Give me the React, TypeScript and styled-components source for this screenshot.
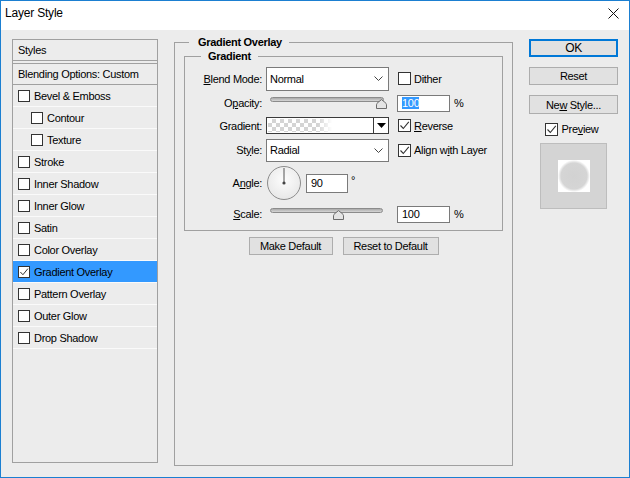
import React from "react";
import styled, { createGlobalStyle } from "styled-components";

const GlobalStyle = createGlobalStyle`
  html, body { margin: 0; padding: 0; }
  body {
    font-family: "Liberation Sans", Arial, sans-serif;
    font-size: 11px;
    letter-spacing: -0.3px;
    color: #000;
    background: #fff;
  }
  * { box-sizing: border-box; }
`;

const Window = styled.div`
  width: 630px;
  height: 478px;
  border: 1px solid #1b7fd1;
  background: #ececec;
  display: flex;
  flex-direction: column;
`;

const TitleBar = styled.div`
  height: 29px;
  flex-shrink: 0;
  background: #fff;
  display: flex;
  align-items: center;
  justify-content: space-between;
  padding: 0 10px 5px 4px;
  font-size: 12px;
  letter-spacing: -0.2px;
`;

const Body = styled.div`
  display: flex;
  align-items: flex-start;
  gap: 16px;
  padding: 9px 0 0 11px;
`;

/* ---------- left list ---------- */

const StylesPanel = styled.div`
  width: 146px;
  height: 424px;
  border: 1px solid #a0a0a0;
  flex-shrink: 0;
`;

const PanelHeader = styled.div`
  height: 21px;
  border-bottom: 1px solid #a0a0a0;
  display: flex;
  align-items: center;
  padding-left: 5px;
  margin-bottom: 2px;
`;

const BlendingRow = styled.div`
  height: 22px;
  border-top: 1px solid #a0a0a0;
  border-bottom: 1px solid #a0a0a0;
  display: flex;
  align-items: center;
  padding-left: 5px;
`;

const EffectRow = styled.div<{ $indent?: boolean; $selected?: boolean }>`
  height: 22px;
  border-bottom: 1px solid #fafafa;
  display: flex;
  align-items: center;
  gap: 4px;
  padding-left: ${(p) => (p.$indent ? 18 : 5)}px;
  background: ${(p) => (p.$selected ? "#3399ff" : "transparent")};
`;

/* ---------- checkbox ---------- */

const Box = styled.span<{ $size: number }>`
  width: ${(p) => p.$size}px;
  height: ${(p) => p.$size}px;
  border: 1px solid #333;
  background: #fff;
  display: inline-flex;
  align-items: center;
  justify-content: center;
  flex-shrink: 0;
`;

const CheckBox = ({ checked, size = 13 }: { checked?: boolean; size?: number }) => (
  <Box $size={size}>
    {checked && (
      <svg width={size - 2} height={size - 2} viewBox="0 0 11 11">
        <polyline points="1.5,5.5 4.3,8.5 9.8,1.8" fill="none" stroke="#333" strokeWidth="1.1" />
      </svg>
    )}
  </Box>
);

const CheckLabel = styled.label<{ $shift?: number }>`
  display: flex;
  align-items: center;
  gap: 3px;
  margin-left: ${(p) => p.$shift ?? 1}px;
  white-space: nowrap;
`;

/* ---------- center groups ---------- */

const OuterGroup = styled.fieldset`
  width: 339px;
  height: 430px;
  margin: -3px 0 0;
  padding: 0;
  border: 1px solid #a0a0a0;
  flex-shrink: 0;
  display: flex;
  flex-direction: column;
`;

const InnerGroup = styled.fieldset`
  margin: 1px 9px 0;
  padding: 3px 0 4px;
  border: 1px solid #a0a0a0;
`;

const Legend = styled.legend<{ $offset: number; $padLeft: number }>`
  font-weight: bold;
  line-height: 13px;
  margin-left: ${(p) => p.$offset}px;
  padding: 0 7px 0 ${(p) => p.$padLeft}px;
`;

const FormGrid = styled.div`
  display: grid;
  grid-template-columns: 81px 123px 1fr;
  grid-template-rows: 25px 24px 21px 28px 38px 24px;
  align-items: center;
`;

const FieldLabel = styled.div`
  text-align: right;
  padding-right: 4px;
  white-space: nowrap;
`;

const Trailing = styled.div`
  padding-left: 8px;
  display: flex;
  align-items: center;
`;

const Select = styled.div<{ $h: number }>`
  width: 123px;
  height: ${(p) => p.$h}px;
  border: 1px solid #7a7a7a;
  background: #fff;
  display: flex;
  align-items: center;
  justify-content: space-between;
  padding: 0 5px 0 3px;
`;

const Chevron = () => (
  <svg width="9" height="5" viewBox="0 0 9 5">
    <polyline points="0.5,0.5 4.5,4.5 8.5,0.5" fill="none" stroke="#444" strokeWidth="1" />
  </svg>
);

const SliderWrap = styled.div<{ $w: number }>`
  position: relative;
  width: ${(p) => p.$w}px;
  height: 12px;
  margin-left: 4px;
`;

const Track = styled.div`
  height: 5px;
  border: 1px solid #8b8b8b;
  border-radius: 3px;
  background: linear-gradient(#a9a9a9, #d6d6d6);
`;

const Thumb = styled.svg<{ $x: number }>`
  position: absolute;
  top: 2px;
  left: ${(p) => p.$x}px;
`;

const Slider = ({ width, at }: { width: number; at: number }) => (
  <SliderWrap $w={width}>
    <Track />
    <Thumb $x={at - 5.5} width="11" height="10" viewBox="0 0 11 10">
      <path
        d="M0.5 9.5 V5.8 Q0.5 4.4 2 3.4 L5.5 0.6 L9 3.4 Q10.5 4.4 10.5 5.8 V9.5 Z"
        fill="#e4e4e4"
        stroke="#6b6b6b"
      />
    </Thumb>
  </SliderWrap>
);

const TextField = styled.div<{ $w: number; $h: number }>`
  width: ${(p) => p.$w}px;
  height: ${(p) => p.$h}px;
  border: 1px solid #7a7a7a;
  background: #fff;
  display: flex;
  align-items: center;
  padding-left: 4px;
`;

const Selected = styled.span`
  background: #3399ff;
  color: #fff;
`;

const Unit = styled.span`
  margin-left: 4px;
`;

const GradientPicker = styled.div`
  width: 123px;
  height: 17px;
  border: 1px solid #3a3a3a;
  background: #fff;
  display: flex;
`;

const Swatch = styled.div`
  flex: 1;
  margin: 1px;
  background:
    linear-gradient(to right, rgba(255, 255, 255, 0) 0px, rgba(255, 255, 255, 0) 50px, #fff 64px),
    repeating-conic-gradient(#d4d4d4 0 25%, #fff 0 50%) 0 0 / 8px 8px;
`;

const ArrowCell = styled.div`
  width: 15px;
  border-left: 1px solid #3a3a3a;
  display: flex;
  align-items: center;
  justify-content: center;
`;

const AngleRow = styled.div`
  display: flex;
  align-items: center;
  height: 34px;
`;

const Dial = styled.div`
  width: 34px;
  height: 34px;
  margin-left: 1px;
  margin-right: 5px;
  border-radius: 50%;
  border: 1px solid #8c8c8c;
  background: radial-gradient(circle at 50% 40%, #fdfdfd, #e2e2e2);
  display: flex;
  align-items: center;
  justify-content: center;
`;

const Degree = styled.span`
  align-self: flex-start;
  margin: 8px 0 0 3px;
`;

const ButtonRow = styled.div`
  display: flex;
  justify-content: center;
  gap: 10px;
  margin-top: 6px;
`;

const Button = styled.button<{ $w?: number; $h?: number; $primary?: boolean }>`
  width: ${(p) => (p.$w ? `${p.$w}px` : "100%")};
  height: ${(p) => p.$h ?? 18}px;
  margin: 0;
  padding: 0;
  font: inherit;
  font-size: ${(p) => (p.$primary ? 12 : 11)}px;
  letter-spacing: -0.3px;
  color: #000;
  background: #e1e1e1;
  border: ${(p) => (p.$primary ? "2px solid #0078d7" : "1px solid #adadad")};
`;

/* ---------- right column ---------- */

const Actions = styled.div`
  width: 89px;
  display: flex;
  flex-direction: column;
  align-items: center;
  gap: 10px;
`;

const PreviewToggle = styled.label`
  display: flex;
  align-items: center;
  gap: 3px;
  height: 12px;
  margin-top: -1px;
  margin-left: -3px;
`;

const PreviewBox = styled.div`
  width: 67px;
  height: 66px;
  margin-top: -2px;
  background: #d4d4d4;
  border: 1px solid #bdbdbd;
  display: flex;
  align-items: center;
  justify-content: center;
`;

const PreviewTile = styled.div`
  width: 32px;
  height: 32px;
  background: radial-gradient(circle, #d2d2d2 0, #d5d5d5 13px, #fff 16px);
`;

const effects: { label: string; indent?: boolean; checked?: boolean }[] = [
  { label: "Bevel & Emboss" },
  { label: "Contour", indent: true },
  { label: "Texture", indent: true },
  { label: "Stroke" },
  { label: "Inner Shadow" },
  { label: "Inner Glow" },
  { label: "Satin" },
  { label: "Color Overlay" },
  { label: "Gradient Overlay", checked: true },
  { label: "Pattern Overlay" },
  { label: "Outer Glow" },
  { label: "Drop Shadow" },
];

const App = () => {
  return (
    <Window>
      <GlobalStyle />
      <TitleBar>
        <span>Layer Style</span>
        <svg width="11" height="11" viewBox="0 0 11 11">
          <path d="M0.5 0.5 L10.5 10.5 M10.5 0.5 L0.5 10.5" stroke="#111" strokeWidth="1" />
        </svg>
      </TitleBar>
      <Body>
        <StylesPanel>
          <PanelHeader>Styles</PanelHeader>
          <BlendingRow>Blending Options: Custom</BlendingRow>
          {effects.map((e) => (
            <EffectRow key={e.label} $indent={e.indent} $selected={e.checked}>
              <CheckBox size={12} checked={e.checked} />
              <span>{e.label}</span>
            </EffectRow>
          ))}
        </StylesPanel>

        <OuterGroup>
          <Legend $offset={14} $padLeft={9}>Gradient Overlay</Legend>
          <InnerGroup>
            <Legend $offset={16} $padLeft={7}>Gradient</Legend>
            <FormGrid>
              <FieldLabel><u>B</u>lend Mode:</FieldLabel>
              <Select $h={24}>
                <span>Normal</span>
                <Chevron />
              </Select>
              <Trailing>
                <CheckLabel><CheckBox /> Dither</CheckLabel>
              </Trailing>

              <FieldLabel>O<u>p</u>acity:</FieldLabel>
              <Slider width={114} at={111} />
              <Trailing>
                <TextField $w={53} $h={17}><Selected>100</Selected></TextField>
                <Unit>%</Unit>
              </Trailing>

              <FieldLabel>Gradient:</FieldLabel>
              <GradientPicker>
                <Swatch />
                <ArrowCell>
                  <svg width="9" height="5" viewBox="0 0 9 5">
                    <polygon points="0,0 9,0 4.5,5" fill="#000" />
                  </svg>
                </ArrowCell>
              </GradientPicker>
              <Trailing>
                <CheckLabel><CheckBox checked /> <span><u>R</u>everse</span></CheckLabel>
              </Trailing>

              <FieldLabel>St<u>y</u>le:</FieldLabel>
              <Select $h={23}>
                <span>Radial</span>
                <Chevron />
              </Select>
              <Trailing>
                <CheckLabel><CheckBox checked /> <span>Align w<u>i</u>th Layer</span></CheckLabel>
              </Trailing>

              <FieldLabel>A<u>n</u>gle:</FieldLabel>
              <AngleRow>
                <Dial>
                  <svg width="32" height="32" viewBox="0 0 32 32">
                    <line x1="16" y1="1" x2="16" y2="16" stroke="#555" strokeWidth="1" />
                    <circle cx="16" cy="16" r="1.6" fill="#444" />
                  </svg>
                </Dial>
                <TextField $w={42} $h={19}>90</TextField>
                <Degree>°</Degree>
              </AngleRow>
              <div />

              <FieldLabel><u>S</u>cale:</FieldLabel>
              <Slider width={113} at={68} />
              <Trailing>
                <TextField $w={53} $h={17}>100</TextField>
                <Unit>%</Unit>
              </Trailing>
            </FormGrid>
          </InnerGroup>
          <ButtonRow>
            <Button $w={84}>Make Default</Button>
            <Button $w={96}>Reset to Default</Button>
          </ButtonRow>
        </OuterGroup>

        <Actions>
          <Button $primary>OK</Button>
          <Button>Reset</Button>
          <Button $h={19}>Ne<u>w</u> Style...</Button>
          <PreviewToggle>
            <CheckBox checked />
            <span>Pre<u>v</u>iew</span>
          </PreviewToggle>
          <PreviewBox>
            <PreviewTile />
          </PreviewBox>
        </Actions>
      </Body>
    </Window>
  );
};

export default App;
